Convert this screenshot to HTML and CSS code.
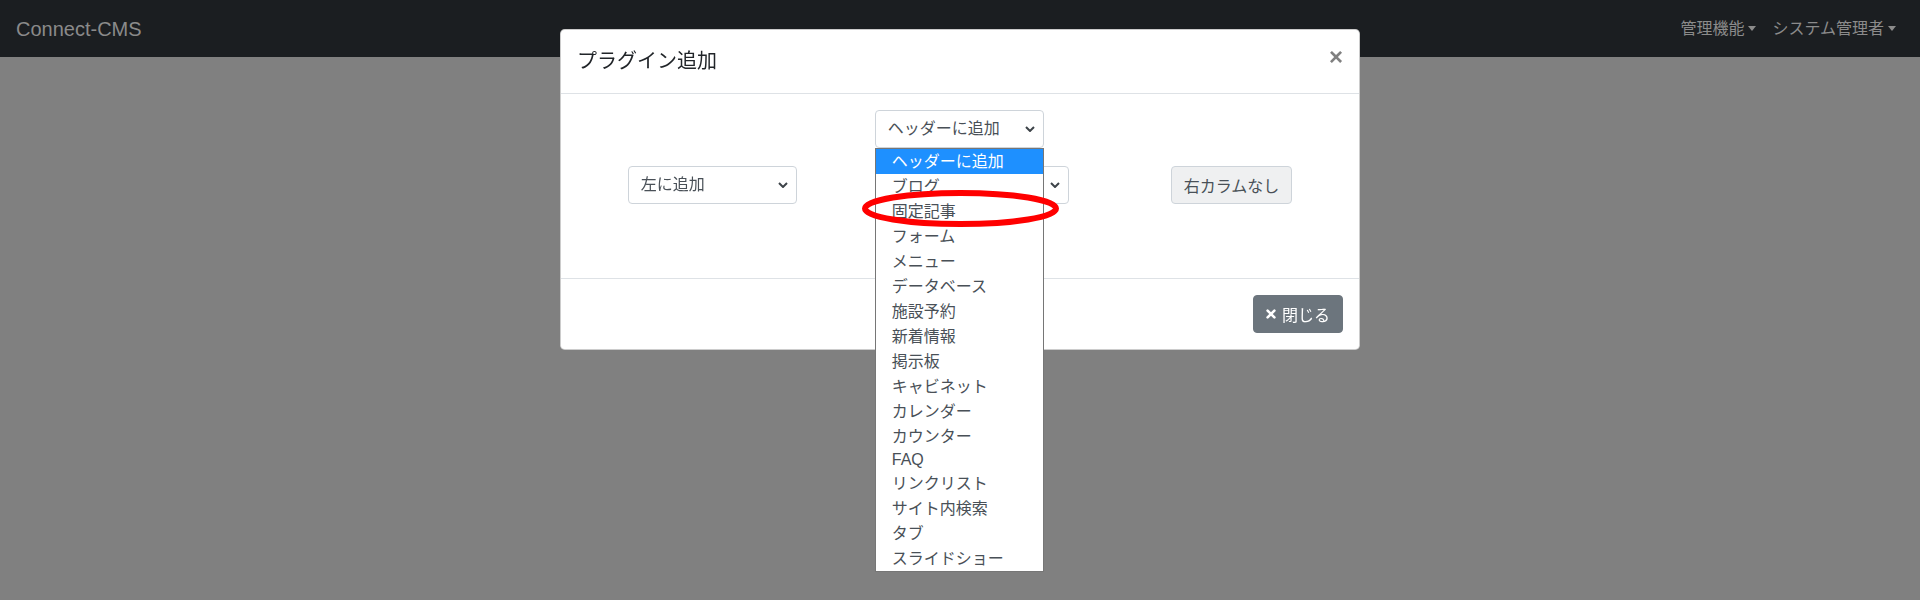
FILE: index.html
```html
<!DOCTYPE html>
<html lang="ja">
<head>
<meta charset="utf-8">
<title>Connect-CMS</title>
<link rel="stylesheet" href="styles.css">
</head>
<body>
<header class="navbar">
  <a class="brand">Connect-CMS</a>
  <nav class="nav-right">
    <span class="nav-link dropdown-toggle">管理機能</span>
    <span class="nav-link dropdown-toggle">システム管理者</span>
  </nav>
</header>

<div class="modal">
  <div class="modal-dialog">
    <div class="modal-content">
      <div class="modal-header">
        <h5 class="modal-title">プラグイン追加</h5>
        <button class="close" type="button">×</button>
      </div>
      <div class="modal-body">
        <div class="area-row">
          <div class="select w-side">
            <span>左に追加</span>
            <svg class="chev" viewBox="0 0 10 6" width="10" height="6"><polyline points="1,1 5,5 9,1"/></svg>
          </div>
          <div class="center-col">
            <div class="select w-side">
              <span>ヘッダーに追加</span>
              <svg class="chev" viewBox="0 0 10 6" width="10" height="6"><polyline points="1,1 5,5 9,1"/></svg>
            </div>
            <div class="select w-main">
              <span>メインに追加</span>
              <svg class="chev" viewBox="0 0 10 6" width="10" height="6"><polyline points="1,1 5,5 9,1"/></svg>
            </div>
            <div class="select w-side">
              <span>フッターに追加</span>
              <svg class="chev" viewBox="0 0 10 6" width="10" height="6"><polyline points="1,1 5,5 9,1"/></svg>
            </div>
            <ul class="popup">
              <li class="sel">ヘッダーに追加</li>
              <li>ブログ</li>
              <li>固定記事</li>
              <li>フォーム</li>
              <li>メニュー</li>
              <li>データベース</li>
              <li>施設予約</li>
              <li>新着情報</li>
              <li>掲示板</li>
              <li>キャビネット</li>
              <li>カレンダー</li>
              <li>カウンター</li>
              <li class="latin">FAQ</li>
              <li>リンクリスト</li>
              <li>サイト内検索</li>
              <li>タブ</li>
              <li>スライドショー</li>
            </ul>
            <svg class="annot" viewBox="0 0 197 37" width="197" height="37"><ellipse cx="98.5" cy="18.5" rx="95.5" ry="15.5"/></svg>
          </div>
          <button class="btn-none" type="button">右カラムなし</button>
        </div>
      </div>
      <div class="modal-footer">
        <button class="btn-close" type="button">
          <svg class="x-icon" viewBox="0 0 10 10" width="10" height="10"><path d="M1.6 1.6 L8.4 8.4 M8.4 1.6 L1.6 8.4"/></svg>
          <span>閉じる</span>
        </button>
      </div>
    </div>
  </div>
</div>
</body>
</html>
```

FILE: styles.css
```css
* { box-sizing: border-box; }

html, body {
  margin: 0;
  height: 100%;
}

body {
  background: #808080;
  font-family: "Liberation Sans", "Noto Sans CJK JP", sans-serif;
  font-size: 16px;
  color: #212529;
}

/* navbar */
.navbar {
  height: 57px;
  background: #1b1e21;
  padding: 0 16px;
  display: flex;
  align-items: center;
  justify-content: space-between;
}

.brand {
  font-size: 20px;
  line-height: 30px;
  color: #8a8a8a;
}

.nav-right {
  display: flex;
  align-items: center;
}

.nav-link {
  padding: 0 8px;
  font-size: 16px;
  line-height: 24px;
  color: #8b8b8b;
}

.dropdown-toggle::after {
  content: "";
  display: inline-block;
  margin-left: 4px;
  vertical-align: 3px;
  border-top: 5px solid #8b8b8b;
  border-left: 4.5px solid transparent;
  border-right: 4.5px solid transparent;
}

/* modal */
.modal {
  position: fixed;
  inset: 0;
}

.modal-dialog {
  width: 800px;
  margin: 29px auto;
}

.modal-content {
  background: #fff;
  border: 1px solid rgba(0, 0, 0, 0.2);
  border-radius: 4.8px;
}

.modal-header {
  display: flex;
  align-items: flex-start;
  padding: 16px;
  border-bottom: 1px solid #dee2e6;
}

.modal-title {
  margin: 0;
  font-size: 20px;
  line-height: 31px;
  font-weight: 400;
  color: #212529;
}

.close {
  margin: -16px -16px -16px auto;
  padding: 16px;
  border: 0;
  background: transparent;
  font-family: "Liberation Sans", sans-serif;
  font-size: 24px;
  font-weight: 700;
  line-height: 22px;
  color: #808080;
}

.modal-body {
  padding: 16px 16px 18px;
}

.area-row {
  display: flex;
  align-items: center;
  justify-content: center;
}

.center-col {
  position: relative;
  width: 194px;
  margin: 0 102px 0 78px;
  display: flex;
  flex-direction: column;
  align-items: flex-start;
  gap: 18px;
}

.select {
  height: 38px;
  border: 1px solid #ced4da;
  border-radius: 4px;
  background: #fff;
  padding: 0 8px 0 12px;
  display: flex;
  align-items: center;
  justify-content: space-between;
  font-size: 16px;
  line-height: 24px;
  color: #495057;
  flex-shrink: 0;
}

.w-side { width: 169px; }
.w-main { width: 194px; }

.chev {
  display: block;
  fill: none;
  stroke: #3d4349;
  stroke-width: 2;
}

.popup {
  position: absolute;
  top: 38px;
  left: 0;
  width: 169px;
  margin: 0;
  padding: 0;
  list-style: none;
  background: #fff;
  border: 1px solid #767676;
  z-index: 2;
}

.popup li {
  height: 25px;
  line-height: 25px;
  padding-left: 16px;
  font-size: 16px;
  color: #495057;
  white-space: nowrap;
}

.popup li.latin {
  height: 22px;
  line-height: 22px;
}

.popup li.sel {
  background: #1e90ff;
  color: #fff;
}

.annot {
  position: absolute;
  left: -13px;
  top: 80px;
  z-index: 3;
  overflow: visible;
  fill: none;
  stroke: #ff0000;
  stroke-width: 6;
}

.btn-none {
  height: 38px;
  padding: 0 12px;
  border: 1px solid #ced4da;
  border-radius: 4px;
  background: #eff0f1;
  font-family: "Liberation Sans", "Noto Sans CJK JP", sans-serif;
  font-size: 16px;
  color: #495057;
}

.modal-footer {
  display: flex;
  justify-content: flex-end;
  padding: 12px;
  border-top: 1px solid #dee2e6;
}

.btn-close {
  margin: 4px;
  height: 38px;
  padding: 0 12px;
  display: inline-flex;
  align-items: center;
  gap: 6px;
  background: #6c757d;
  border: 1px solid #6c757d;
  border-radius: 4px;
  color: #fff;
  font-family: "Liberation Sans", "Noto Sans CJK JP", sans-serif;
  font-size: 16px;
}

.x-icon {
  display: block;
  fill: none;
  stroke: #fff;
  stroke-width: 2.6;
  stroke-linecap: round;
}
```
